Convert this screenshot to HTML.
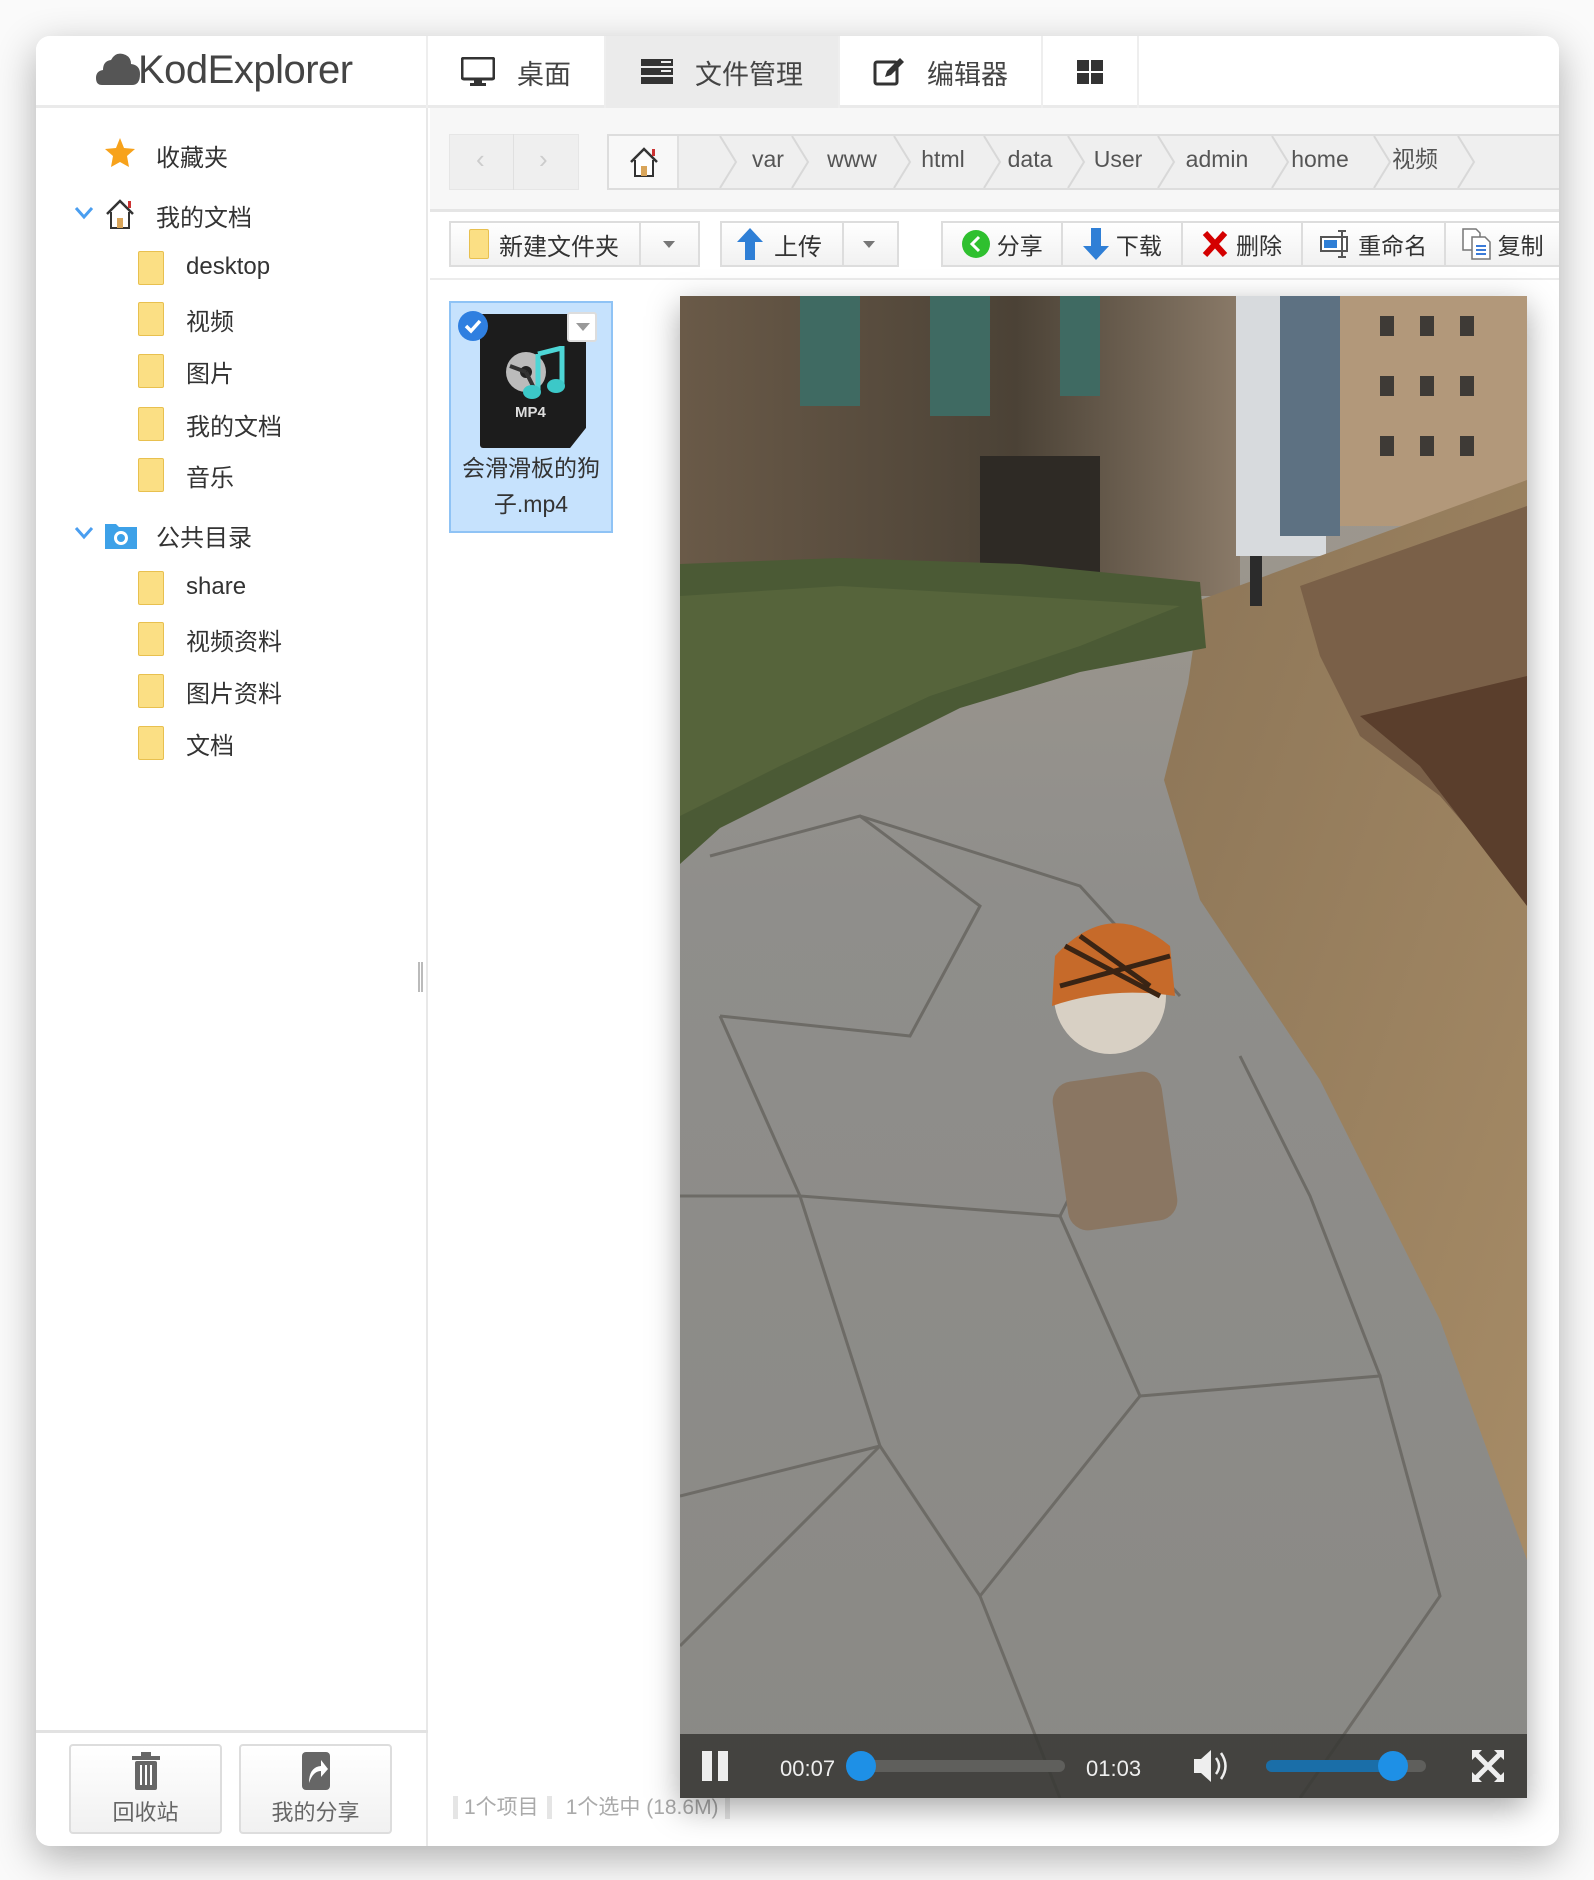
<!DOCTYPE html>
<html><head><meta charset="utf-8"><style>
*{margin:0;padding:0;box-sizing:border-box}
body{width:1594px;height:1880px;background:#fafafa;position:relative;overflow:hidden;font-family:"Liberation Sans","Noto Sans CJK SC",sans-serif;color:#333}
.win{position:absolute;left:36px;top:36px;width:1523px;height:1810px;background:#fff;border-radius:14px;box-shadow:0 12px 40px rgba(0,0,0,.3);overflow:hidden}
.a{position:absolute}
.hdr{left:0;top:0;width:1523px;height:72px;border-bottom:3px solid #eaeaea;background:#fff}
.tab{top:0;height:72px;border-right:2px solid #eee;font-size:27px;color:#444;display:flex;align-items:center;justify-content:center;gap:22px}
.side{left:0;top:72px;width:392px;height:1738px;border-right:2px solid #e8e8e8;background:#fff}
.it{font-size:24px;color:#333;white-space:nowrap}
.fold{width:26px;height:34px;background:#fbdf84;border:1px solid #e8c04f;border-radius:2px}
.btn{background:linear-gradient(#fff,#f1f1f1);border:2px solid #ddd;font-size:24px;color:#333;display:flex;align-items:center}
.crumb{font-size:23px;color:#555;top:108px;width:100px;text-align:center;line-height:30px}
</style></head><body>
<div class="win">
 <div class="a hdr"></div>
 <div class="a" style="left:0;top:0;width:392px;height:72px;border-right:2px solid #eee"></div>
 <svg class="a" style="left:60px;top:16px" width="44" height="34" viewBox="0 0 44 34"><path d="M6 33 Q0 33 0 26 Q0 19 7 18 Q7 9 15 8 Q19 0 27 2 Q35 4 35 12 Q44 13 44 22 Q44 33 36 33Z" fill="#555"/></svg>
 <div class="a" style="left:102px;top:10px;font-size:40px;color:#444;letter-spacing:-0.5px;line-height:48px">KodExplorer</div>
 <div class="a tab" style="left:392px;width:178px"><svg width="34" height="30" viewBox="0 0 34 30"><rect x="1" y="1" width="32" height="21" rx="2" fill="none" stroke="#333" stroke-width="3"/><rect x="13" y="22" width="8" height="5" fill="#333"/><rect x="9" y="26" width="16" height="3" fill="#333"/></svg>桌面</div>
 <div class="a tab" style="left:570px;width:234px;background:#ebebeb"><svg width="32" height="28" viewBox="0 0 32 28"><rect x="0" y="1" width="32" height="7" fill="#333"/><rect x="0" y="10" width="32" height="7" fill="#333"/><rect x="0" y="19" width="32" height="7" fill="#333"/><rect x="20" y="3" width="10" height="2" fill="#eee"/><rect x="20" y="12" width="10" height="2" fill="#eee"/></svg>文件管理</div>
 <div class="a tab" style="left:804px;width:203px"><svg width="32" height="30" viewBox="0 0 32 30"><rect x="2" y="5" width="22" height="22" rx="2" fill="none" stroke="#333" stroke-width="3"/><path d="M12 20 L14 14 L27 1 L31 5 L18 18Z" fill="#333"/></svg>编辑器</div>
 <div class="a tab" style="left:1007px;width:96px"><svg width="26" height="24" viewBox="0 0 26 24"><rect x="0" y="0" width="12" height="11" fill="#333"/><rect x="14" y="0" width="12" height="11" fill="#333"/><rect x="0" y="13" width="12" height="11" fill="#333"/><rect x="14" y="13" width="12" height="11" fill="#333"/></svg></div>

 <div class="a side"></div>
 <svg class="a" style="left:68px;top:101px" width="32" height="32" viewBox="0 0 32 32"><path d="M16 1 L20 11 L31 12 L23 19 L25 30 L16 25 L7 30 L9 19 L1 12 L12 11Z" fill="#f7a21b"/></svg>
 <div class="a it" style="left:120px;top:102px">收藏夹</div>
 <svg class="a" style="left:38px;top:170px" width="20" height="14"><path d="M2 2 L10 11 L18 2" fill="none" stroke="#4a9ef0" stroke-width="3"/></svg>
 <svg class="a" style="left:68px;top:162px" width="32" height="32" viewBox="0 0 32 32"><path d="M3 16 L16 3 L29 16" fill="none" stroke="#333" stroke-width="2.5"/><path d="M7 14 V30 H25 V14" fill="#fff" stroke="#333" stroke-width="2"/><rect x="13" y="20" width="6" height="10" fill="#d9a55a"/><rect x="24" y="3" width="3" height="7" fill="#c33"/></svg>
 <div class="a it" style="left:120px;top:162px">我的文档</div>
 <div class="a fold" style="left:102px;top:215px"></div><div class="a it" style="left:150px;top:217px">desktop</div>
 <div class="a fold" style="left:102px;top:266px"></div><div class="a it" style="left:150px;top:266px">视频</div>
 <div class="a fold" style="left:102px;top:318px"></div><div class="a it" style="left:150px;top:318px">图片</div>
 <div class="a fold" style="left:102px;top:371px"></div><div class="a it" style="left:150px;top:371px">我的文档</div>
 <div class="a fold" style="left:102px;top:422px"></div><div class="a it" style="left:150px;top:422px">音乐</div>
 <svg class="a" style="left:38px;top:490px" width="20" height="14"><path d="M2 2 L10 11 L18 2" fill="none" stroke="#4a9ef0" stroke-width="3"/></svg>
 <svg class="a" style="left:68px;top:484px" width="34" height="30" viewBox="0 0 34 30"><path d="M1 4 H12 L15 7 H33 V29 H1Z" fill="#3da1e8"/><circle cx="17" cy="18" r="7" fill="#fff"/><circle cx="17" cy="18" r="4" fill="#3da1e8"/></svg>
 <div class="a it" style="left:120px;top:482px">公共目录</div>
 <div class="a fold" style="left:102px;top:535px"></div><div class="a it" style="left:150px;top:537px">share</div>
 <div class="a fold" style="left:102px;top:586px"></div><div class="a it" style="left:150px;top:586px">视频资料</div>
 <div class="a fold" style="left:102px;top:638px"></div><div class="a it" style="left:150px;top:638px">图片资料</div>
 <div class="a fold" style="left:102px;top:690px"></div><div class="a it" style="left:150px;top:690px">文档</div>
 <div class="a" style="left:382px;top:926px;width:5px;height:30px;border-left:2px solid #bbb;border-right:2px solid #bbb"></div>
 <div class="a" style="left:0;top:1694px;width:392px;height:3px;background:#e2e2e2"></div>
 <div class="a btn" style="left:33px;top:1708px;width:153px;height:90px;border-radius:4px;flex-direction:column;justify-content:center;gap:4px;font-size:22px;color:#666">
  <svg width="30" height="40" viewBox="0 0 30 40"><rect x="1" y="5" width="28" height="4" fill="#666"/><rect x="10" y="1" width="10" height="4" fill="#666"/><rect x="4" y="10" width="22" height="29" rx="2" fill="#666"/><rect x="9" y="14" width="2" height="20" fill="#fff"/><rect x="14" y="14" width="2" height="20" fill="#fff"/><rect x="19" y="14" width="2" height="20" fill="#fff"/></svg>回收站</div>
 <div class="a btn" style="left:203px;top:1708px;width:153px;height:90px;border-radius:4px;flex-direction:column;justify-content:center;gap:4px;font-size:22px;color:#666">
  <svg width="30" height="40" viewBox="0 0 30 40"><rect x="1" y="1" width="28" height="38" rx="4" fill="#666"/><path d="M8 32 Q8 16 20 15 V9 L27 18 L20 26 V20 Q12 20 8 32Z" fill="#fff"/></svg>我的分享</div>

 <!-- path bar -->
 <div class="a" style="left:394px;top:72px;width:1129px;height:104px;background:#f7f7f7;border-bottom:3px solid #e5e5e5"></div>
 <div class="a" style="left:413px;top:98px;width:130px;height:56px;background:#efefef;border:1px solid #e6e6e6"></div>
 <div class="a" style="left:477px;top:98px;width:1px;height:56px;background:#e0e0e0"></div>
 <div class="a" style="left:440px;top:108px;font-size:26px;color:#ccc">‹</div><div class="a" style="left:503px;top:108px;font-size:26px;color:#ccc">›</div>
 <div class="a" style="left:571px;top:98px;width:952px;height:56px;background:#efefef;border:2px solid #ddd;border-right:none"></div>
 <div class="a" style="left:573px;top:100px;width:70px;height:52px;background:#f8f8f8;border-right:2px solid #e0e0e0"></div>
 <svg class="a" style="left:592px;top:110px" width="32" height="32" viewBox="0 0 32 32"><path d="M3 16 L16 3 L29 16" fill="none" stroke="#333" stroke-width="2.5"/><path d="M7 14 V30 H25 V14" fill="#fff" stroke="#333" stroke-width="2"/><rect x="13" y="20" width="6" height="10" fill="#d9a55a"/><rect x="24" y="3" width="3" height="7" fill="#c33"/></svg>
 <svg class="a" style="left:640px;top:100px" width="880" height="52"><g fill="none" stroke="#d8d8d8" stroke-width="2">
  <path d="M44 0 L60 26 L44 52"/><path d="M116 0 L132 26 L116 52"/><path d="M218 0 L234 26 L218 52"/><path d="M308 0 L324 26 L308 52"/><path d="M392 0 L408 26 L392 52"/><path d="M482 0 L498 26 L482 52"/><path d="M596 0 L612 26 L596 52"/><path d="M698 0 L714 26 L698 52"/><path d="M782 0 L798 26 L782 52"/></g></svg>
 <div class="a crumb" style="left:682px">var</div>
 <div class="a crumb" style="left:766px">www</div>
 <div class="a crumb" style="left:857px">html</div>
 <div class="a crumb" style="left:944px">data</div>
 <div class="a crumb" style="left:1032px">User</div>
 <div class="a crumb" style="left:1131px">admin</div>
 <div class="a crumb" style="left:1234px">home</div>
 <div class="a crumb" style="left:1329px">视频</div>

 <!-- toolbar -->
 <div class="a" style="left:394px;top:176px;width:1129px;height:68px;background:#fff;border-bottom:2px solid #ececec"></div>
 <div class="a btn" style="left:413px;top:185px;width:251px;height:46px"><div class="fold" style="margin:0 10px 0 18px;width:20px;height:30px"></div>新建文件夹<div style="position:absolute;left:188px;top:0;width:2px;height:42px;background:#ddd"></div><div style="position:absolute;left:212px;top:18px;border:6px solid transparent;border-top:7px solid #777"></div></div>
 <div class="a btn" style="left:684px;top:185px;width:179px;height:46px"><svg style="margin:0 10px 0 14px" width="28" height="34" viewBox="0 0 28 34"><path d="M14 1 L27 15 H19 V33 H9 V15 H1Z" fill="#2f7fd6"/></svg>上传<div style="position:absolute;left:120px;top:0;width:2px;height:42px;background:#ddd"></div><div style="position:absolute;left:141px;top:18px;border:6px solid transparent;border-top:7px solid #777"></div></div>
 <div class="a btn" style="left:905px;top:185px;width:618px;height:46px;font-size:23px;border-right:none">
  <div style="width:120px;display:flex;align-items:center;justify-content:center;gap:6px;border-right:2px solid #ddd;height:42px"><svg width="30" height="30"><circle cx="15" cy="15" r="14" fill="#2fc02f"/><path d="M18 8 L11 15 L18 22" fill="none" stroke="#fff" stroke-width="3"/></svg>分享</div>
  <div style="width:121px;display:flex;align-items:center;justify-content:center;gap:6px;border-right:2px solid #ddd;height:42px"><svg width="28" height="34" viewBox="0 0 28 34"><path d="M14 33 L27 19 H19 V1 H9 V19 H1Z" fill="#2f7fd6"/></svg>下载</div>
  <div style="width:120px;display:flex;align-items:center;justify-content:center;gap:8px;border-right:2px solid #ddd;height:42px"><svg width="26" height="28"><path d="M3 3 L23 25 M23 3 L3 25" stroke="#d40000" stroke-width="6"/></svg>删除</div>
  <div style="width:144px;display:flex;align-items:center;justify-content:center;gap:6px;border-right:2px solid #ddd;height:42px"><svg width="32" height="30"><rect x="1" y="8" width="26" height="14" fill="#fff" stroke="#555" stroke-width="2"/><rect x="4" y="11" width="13" height="8" fill="#2f7fd6"/><path d="M22 2 V28 M18 2 H26 M18 28 H26" stroke="#555" stroke-width="2"/></svg>重命名</div>
  <div style="width:113px;display:flex;align-items:center;justify-content:center;gap:6px;height:42px"><svg width="30" height="32"><path d="M1 1 H14 L18 5 V22 H1Z" fill="#fff" stroke="#777" stroke-width="1.5"/><path d="M10 9 H23 L28 14 V31 H10Z" fill="#fff" stroke="#777" stroke-width="1.5"/><path d="M14 18 H24 M14 22 H24 M14 26 H24" stroke="#3b7bd8" stroke-width="2"/></svg>复制</div>
 </div>

 <!-- file item -->
 <div class="a" style="left:413px;top:265px;width:164px;height:232px;background:#c6e2fd;border:2px solid #8fc3f5"></div>
 <div class="a" style="left:444px;top:278px;width:106px;height:134px;background:#1c1c1c;border-radius:3px;clip-path:polygon(0 0,100% 0,100% 85%,85% 100%,0 100%)"></div>
 <svg class="a" style="left:468px;top:310px" width="64" height="54" viewBox="0 0 64 54"><circle cx="22" cy="26" r="20" fill="#bbb"/><circle cx="22" cy="26" r="6" fill="#222"/><path d="M22 26 L6 20 M22 26 L30 42" stroke="#333" stroke-width="4"/><path d="M34 8 L58 2 V40" stroke="#4dd6d6" stroke-width="5" fill="none"/><path d="M34 8 V46" stroke="#4dd6d6" stroke-width="5"/><ellipse cx="28" cy="46" rx="9" ry="7" fill="#3cc8c8"/><ellipse cx="52" cy="40" rx="9" ry="7" fill="#3cc8c8"/></svg>
 <div class="a" style="left:479px;top:368px;font-size:15px;font-weight:bold;color:#ddd">MP4</div>
 <svg class="a" style="left:421px;top:274px" width="32" height="32"><circle cx="16" cy="16" r="15" fill="#2f7fe0"/><path d="M9 16 L14 21 L23 11" fill="none" stroke="#fff" stroke-width="3.5"/></svg>
 <div class="a" style="left:531px;top:276px;width:30px;height:30px;background:#fff;border:2px solid #ddd;border-radius:3px"><div style="position:absolute;left:7px;top:9px;border:7px solid transparent;border-top:8px solid #999"></div></div>
 <div class="a" style="left:415px;top:414px;width:160px;text-align:center;font-size:23px;line-height:36px;color:#333">会滑滑板的狗<br>子.mp4</div>

 <!-- status -->
 <div class="a" style="left:417px;top:1758px;font-size:21px;line-height:28px;color:#aaa;white-space:nowrap"><span style="border-left:5px solid #e5e5e5;padding:0 8px 0 6px">1个项目</span><span style="border-left:5px solid #e5e5e5;border-right:5px solid #e5e5e5;padding:0 6px 0 14px">1个选中 (18.6M)</span></div>

 <!-- video -->
 <div class="a" style="left:644px;top:260px;width:847px;height:1502px;overflow:hidden;box-shadow:0 10px 30px rgba(0,0,0,.35)">
  <svg width="847" height="1502" viewBox="0 0 847 1502">
   <defs>
    <linearGradient id="pv" x1="0" y1="0" x2="0" y2="1"><stop offset="0" stop-color="#a59c8f"/><stop offset=".4" stop-color="#8f8e8b"/><stop offset="1" stop-color="#8a8985"/></linearGradient>
    <linearGradient id="bl" x1="0" y1="0" x2="1" y2="0"><stop offset="0" stop-color="#6a5a48"/><stop offset=".6" stop-color="#4b4236"/><stop offset="1" stop-color="#8a7a68"/></linearGradient>
    <linearGradient id="gr" x1="0" y1="0" x2="1" y2="1"><stop offset="0" stop-color="#8c7557"/><stop offset="1" stop-color="#a68b66"/></linearGradient>
   </defs>
   <rect width="847" height="1502" fill="url(#pv)"/>
   <rect x="0" y="0" width="560" height="300" fill="url(#bl)"/>
   <rect x="120" y="0" width="60" height="110" fill="#3f6a62"/><rect x="250" y="0" width="60" height="120" fill="#3f6a62"/><rect x="380" y="0" width="40" height="100" fill="#3f6a62"/>
   <rect x="300" y="160" width="120" height="120" fill="#2e2a25"/>
   <rect x="556" y="0" width="90" height="260" fill="#d7dadd"/>
   <rect x="640" y="0" width="207" height="230" fill="#b2987a"/>
   <rect x="600" y="0" width="60" height="240" fill="#5d7182"/>
   <g fill="#3e3a36"><rect x="700" y="20" width="14" height="20"/><rect x="740" y="20" width="14" height="20"/><rect x="780" y="20" width="14" height="20"/><rect x="700" y="80" width="14" height="20"/><rect x="740" y="80" width="14" height="20"/><rect x="780" y="80" width="14" height="20"/><rect x="700" y="140" width="14" height="20"/><rect x="740" y="140" width="14" height="20"/><rect x="780" y="140" width="14" height="20"/></g>
   <polygon points="520,304 847,184 847,1264 760,1024 640,784 520,604 484,484 508,388" fill="url(#gr)"/>
   <polygon points="620,290 847,210 847,600 760,500 680,440 640,360" fill="#7a6048"/>
   <polygon points="680,420 847,380 847,610 740,470" fill="#5a3e2c"/>
   <polygon points="0,268 160,262 340,268 520,286 526,352 400,376 280,412 160,472 40,532 0,568" fill="#4b5a35"/>
   <polygon points="0,300 160,290 340,300 500,310 400,350 250,400 100,470 0,520" fill="#5d6b40" opacity=".6"/>
   <rect x="570" y="260" width="12" height="50" fill="#2b2b2b"/>
   <g stroke="#6d6b66" stroke-width="3" fill="none">
    <path d="M30 560 L180 520 L300 610 L230 740 L40 720"/><path d="M180 520 L400 590 L500 700"/><path d="M40 720 L120 900 L380 920 L430 820"/><path d="M0 900 L120 900 L200 1150 L0 1200"/><path d="M380 920 L460 1100 L300 1300 L200 1150"/><path d="M460 1100 L700 1080 L760 1300 L620 1502"/><path d="M300 1300 L380 1502"/><path d="M0 1350 L200 1150"/><path d="M560 760 L630 900 L700 1080"/></g>
   <g>
    <rect x="380" y="780" width="110" height="150" rx="20" fill="#8a7662" transform="rotate(-8 435 855)"/>
    <ellipse cx="430" cy="700" rx="56" ry="58" fill="#d8d0c4"/>
    <path d="M375 660 Q430 600 490 650 L495 700 Q430 690 372 710Z" fill="#c66a2a"/>
    <path d="M385 650 L480 700 M400 640 L470 690 M380 690 L490 660" stroke="#3a2414" stroke-width="5"/>
   </g>
   <rect x="0" y="1438" width="847" height="64" fill="rgba(55,55,52,.85)"/>
   <rect x="22" y="1455" width="10" height="30" fill="#eee"/><rect x="38" y="1455" width="10" height="30" fill="#eee"/>
   <text x="100" y="1480" font-family="Liberation Sans" font-size="22" fill="#eee">00:07</text>
   <rect x="175" y="1464" width="210" height="12" rx="6" fill="#5f5f5c"/>
   <circle cx="181" cy="1470" r="15" fill="#1e90e6"/>
   <text x="406" y="1480" font-family="Liberation Sans" font-size="22" fill="#eee">01:03</text>
   <path d="M514 1463 H521 L531 1454 V1486 L521 1477 H514Z" fill="#eee"/><path d="M536 1462 Q542 1470 536 1478 M541 1457 Q550 1470 541 1483" stroke="#eee" stroke-width="2.5" fill="none"/>
   <rect x="586" y="1464" width="160" height="12" rx="6" fill="#5f5f5c"/><rect x="586" y="1464" width="130" height="12" rx="6" fill="#1a6ea8"/>
   <circle cx="713" cy="1470" r="15" fill="#1e90e6"/>
   <path d="M796 1458 L820 1482 M820 1458 L796 1482" stroke="#eee" stroke-width="5"/><path d="M792 1454 H802 L792 1464Z M824 1454 H814 L824 1464Z M792 1486 H802 L792 1476Z M824 1486 H814 L824 1476Z" fill="#eee"/>
  </svg>
 </div>
</div>
</body></html>
